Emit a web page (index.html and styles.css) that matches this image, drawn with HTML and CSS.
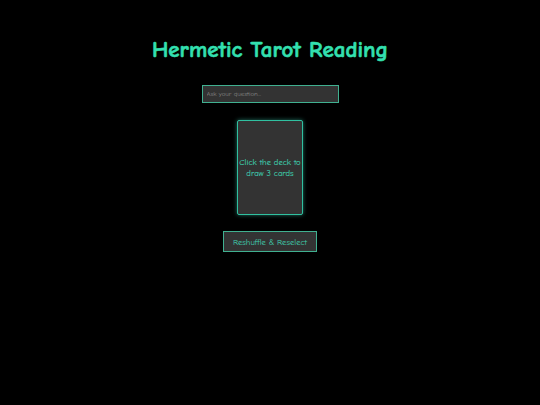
FILE: index.html
```html
<!DOCTYPE html>
<html>
<head>
<meta charset="utf-8">
<link rel="stylesheet" href="styles.css">
</head>
<body>
<div class="app">
  <h1 class="title">Hermetic Tarot Reading</h1>
  <input class="question" type="text" placeholder="Ask your question...">
  <div class="deck">Click the deck to draw 3 cards</div>
  <button class="reshuffle">Reshuffle &amp; Reselect</button>
</div>
</body>
</html>
```

FILE: styles.css
```css
html, body {
  margin: 0;
  padding: 0;
  background: #000;
  height: 100%;
}
body {
  font-family: "Comic Sans MS", "Comic Neue", cursive;
  color: #40e0c0;
}
.app {
  display: flex;
  flex-direction: column;
  align-items: center;
  padding-top: 37px;
}
.title {
  margin: 0;
  font-size: 23px;
  font-weight: bold;
  color: #33e0b0;
  line-height: 26px;
  -webkit-text-stroke: 0.6px #33e0b0;
}
.question {
  margin-top: 22px;
  width: 137px;
  height: 18px;
  box-sizing: border-box;
  background: #333;
  border: 1px solid #40b090;
  color: #ccc;
  font-family: inherit;
  font-size: 6.8px;
  padding: 0 4px;
  outline: none;
}
.question::placeholder {
  color: #888;
}
.deck {
  margin-top: 17px;
  width: 66px;
  height: 95px;
  box-sizing: border-box;
  background: #333;
  border: 1px solid #30c0a0;
  box-shadow: 0 0 4px rgba(64, 224, 192, 0.5);
  border-radius: 2px;
  display: flex;
  align-items: center;
  justify-content: center;
  text-align: center;
  font-size: 8.6px;
  line-height: 11px;
  color: #40e0c0;
  padding: 0 1px;
}
.reshuffle {
  margin-top: 16px;
  width: 94px;
  height: 21px;
  box-sizing: border-box;
  background: #333;
  border: 1px solid #40b090;
  color: #40d0b0;
  font-family: inherit;
  font-size: 8.6px;
  padding: 0;
}
```
